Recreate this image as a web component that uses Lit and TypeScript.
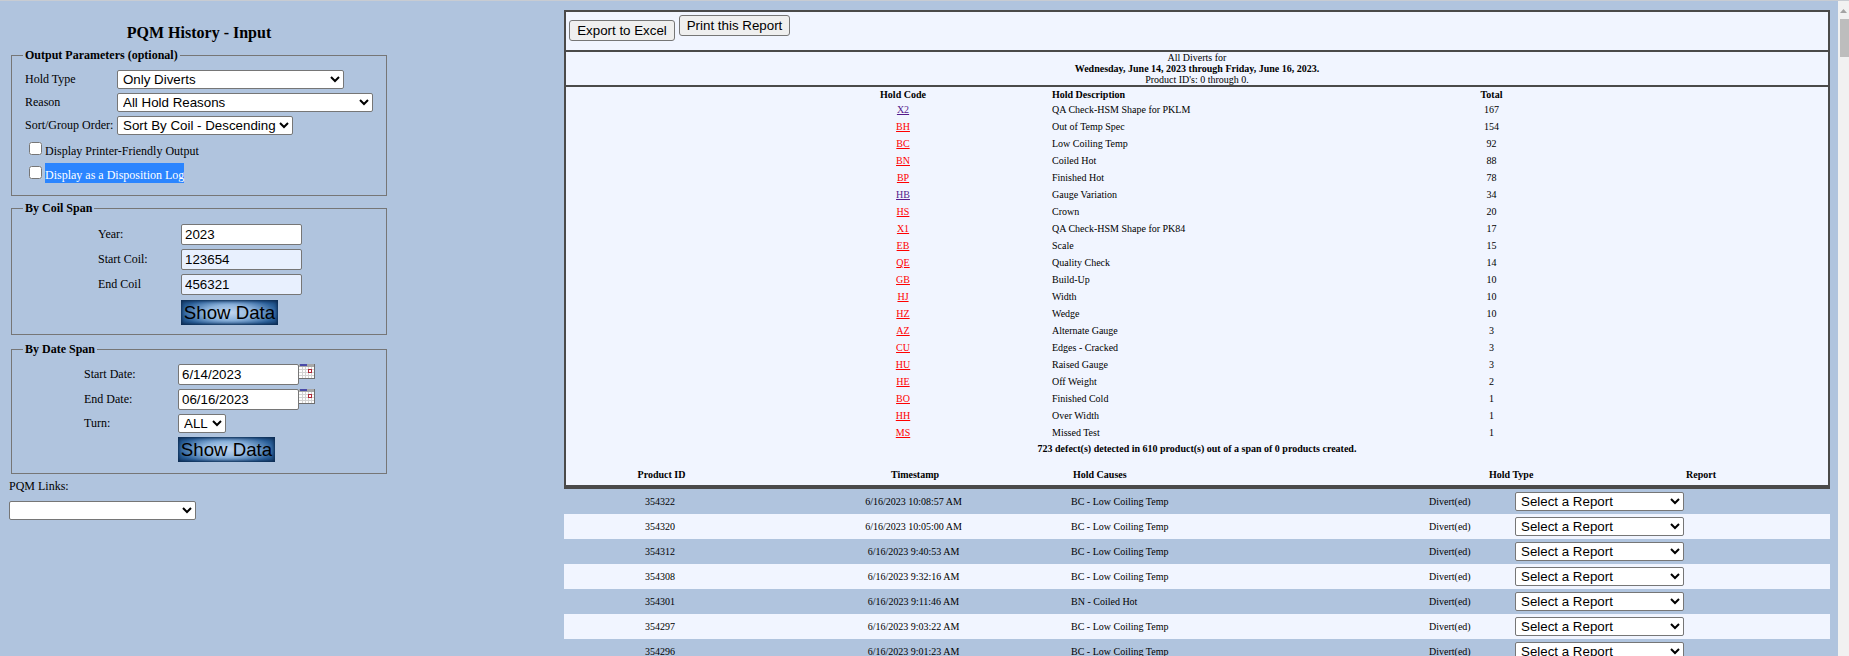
import {css, html, LitElement} from 'lit';
import {customElement} from 'lit/decorators.js';

type Hold = {code: string; desc: string; total: number; visited?: boolean};
type Row = {id: number; time: string; cause: string};

const holds: Hold[] = [
  {code: 'X2', desc: 'QA Check-HSM Shape for PKLM', total: 167, visited: true},
  {code: 'BH', desc: 'Out of Temp Spec', total: 154},
  {code: 'BC', desc: 'Low Coiling Temp', total: 92},
  {code: 'BN', desc: 'Coiled Hot', total: 88},
  {code: 'BP', desc: 'Finished Hot', total: 78},
  {code: 'HB', desc: 'Gauge Variation', total: 34, visited: true},
  {code: 'HS', desc: 'Crown', total: 20},
  {code: 'X1', desc: 'QA Check-HSM Shape for PK84', total: 17},
  {code: 'EB', desc: 'Scale', total: 15},
  {code: 'QE', desc: 'Quality Check', total: 14},
  {code: 'GB', desc: 'Build-Up', total: 10},
  {code: 'HJ', desc: 'Width', total: 10},
  {code: 'HZ', desc: 'Wedge', total: 10},
  {code: 'AZ', desc: 'Alternate Gauge', total: 3},
  {code: 'CU', desc: 'Edges - Cracked', total: 3},
  {code: 'HU', desc: 'Raised Gauge', total: 3},
  {code: 'HE', desc: 'Off Weight', total: 2},
  {code: 'BO', desc: 'Finished Cold', total: 1},
  {code: 'HH', desc: 'Over Width', total: 1},
  {code: 'MS', desc: 'Missed Test', total: 1},
];

const rows: Row[] = [
  {id: 354322, time: '6/16/2023 10:08:57 AM', cause: 'BC - Low Coiling Temp'},
  {id: 354320, time: '6/16/2023 10:05:00 AM', cause: 'BC - Low Coiling Temp'},
  {id: 354312, time: '6/16/2023 9:40:53 AM', cause: 'BC - Low Coiling Temp'},
  {id: 354308, time: '6/16/2023 9:32:16 AM', cause: 'BC - Low Coiling Temp'},
  {id: 354301, time: '6/16/2023 9:11:46 AM', cause: 'BN - Coiled Hot'},
  {id: 354297, time: '6/16/2023 9:03:22 AM', cause: 'BC - Low Coiling Temp'},
  {id: 354296, time: '6/16/2023 9:01:23 AM', cause: 'BC - Low Coiling Temp'},
];

@customElement('app-root')
export class AppRoot extends LitElement {
  static override styles = css`
    :host {
      display: flex;
      width: 1849px;
      height: 656px;
      overflow: hidden;
      background: #b0c4de;
      font-family: 'Liberation Serif', serif;
      font-size: 12px;
      color: #000;
      border-top: 1px solid #c8ccd2;
      box-sizing: border-box;
    }
    select,
    input,
    button.plain {
      font-family: 'Liberation Sans', Arial, sans-serif;
      font-size: 13.33px;
      box-sizing: border-box;
      margin: 0;
    }
    select {
      height: 19px;
      background: #fff;
      border: 1px solid #767676;
      border-radius: 2px;
      color: #000;
      padding: 0 0 0 1px;
    }

    /* left column */
    .left {
      width: 564px;
      flex: none;
      padding-left: 11px;
      box-sizing: border-box;
    }
    h1 {
      width: 376px;
      margin: 0;
      padding: 23px 0 0;
      height: 24px;
      font-size: 16px;
      line-height: 18px;
      text-align: center;
    }
    fieldset {
      width: 376px;
      box-sizing: border-box;
      margin: 0;
      border: 1px solid #767676;
      padding: 0;
    }
    legend {
      margin-left: 11px;
      padding: 0 2px;
      font-weight: bold;
      font-size: 12px;
      line-height: 14px;
    }
    .output {
      height: 148px;
    }
    .out-rows {
      display: grid;
      grid-template-columns: 92px auto;
      justify-content: start;
      row-gap: 4px;
      padding: 8px 0 0 13px;
      align-items: center;
    }
    .checks {
      padding: 4px 0 0 17px;
      display: flex;
      flex-direction: column;
      gap: 4px;
    }
    .check {
      display: flex;
      height: 20px;
      align-items: flex-start;
      line-height: 24px;
    }
    .check input {
      width: 13px;
      height: 13px;
      margin: 3px 3px 0 0;
    }
    .check span {
      height: 20px;
    }
    .selected {
      background: #2b85ff;
      color: #fff;
    }
    .w-type {
      width: 227px;
    }
    .w-reason {
      width: 256px;
    }
    .w-sort {
      width: 176px;
    }
    .coil {
      height: 134px;
      margin-top: 5px;
    }
    .date {
      height: 132px;
      margin-top: 7px;
    }
    .span-grid {
      display: grid;
      row-gap: 4px;
      align-items: center;
    }
    .coil .span-grid {
      grid-template-columns: 83px 121px;
      padding: 9px 0 0 86px;
    }
    .date .span-grid {
      grid-template-columns: 94px 121px auto;
      padding: 8px 0 0 72px;
    }
    .span-grid input {
      width: 121px;
      height: 21px;
      border: 1px solid #767676;
      border-radius: 2px;
      padding: 1px 3px;
      background: #fff;
      color: #000;
    }
    .span-grid input.filled {
      background: #e8f0fe;
    }
    .cal {
      display: block;
      align-self: start;
    }
    .show {
      grid-column: 2;
      width: 97px;
      height: 25px;
      padding: 0;
      border: 0;
      white-space: nowrap;
      font-family: 'Liberation Sans', Arial, sans-serif;
      font-size: 18.67px;
      line-height: 25px;
      color: #000;
      text-align: center;
      background: radial-gradient(ellipse 60% 72% at 50% 50%, #c3d6ee 0%, #8db3dc 42%, #2a5f98 82%, #174272 100%);
      box-shadow: inset 0 0 3px 1px #0c2a50;
    }
    .coil .show {
      margin-top: 1px;
    }
    .turn {
      display: block;
      width: 48px;
    }
    .links-label {
      margin: 5px 0 0 -2px;
      line-height: 15px;
    }
    .links {
      display: block;
      width: 187px;
      margin: 7px 0 0 -2px;
    }

    /* report column */
    .report {
      width: 1266px;
      flex: none;
      padding-top: 9px;
    }
    .box {
      background: #f1f5ff;
      border: 2px solid #4a4a4a;
      box-sizing: border-box;
    }
    .actions {
      height: 40px;
      border-bottom: 0;
      display: flex;
      align-items: flex-start;
      padding: 3px 0 0 3px;
      gap: 4px;
    }
    button.plain {
      width: 111px;
      height: 21px;
      padding: 0;
      background: #efefef;
      border: 1px solid #767676;
      border-radius: 3px;
      color: #000;
    }
    button.export {
      width: 106px;
      margin-top: 5px;
    }
    .heading {
      height: 35px;
      border-bottom: 0;
      font-size: 10px;
      line-height: 11px;
      text-align: center;
    }
    .heading b {
      display: block;
    }
    .summary {
      height: 404px;
      font-size: 10px;
      border-width: 2px 2px 4px 2px;
    }
    .codes {
      display: grid;
      grid-template-columns: 337px 149px 413px 53px;
    }
    .codes > div {
      height: 17px;
      line-height: 17px;
    }
    .codes > .head {
      height: 14px;
      line-height: 15px;
      font-weight: bold;
    }
    .codes .c {
      grid-column: 2;
      width: 0;
      white-space: nowrap;
      display: flex;
      justify-content: center;
    }
    .codes .d {
      grid-column: 3;
    }
    .codes .t {
      grid-column: 4;
      text-align: center;
    }
    a {
      color: #f00;
      text-decoration: underline;
    }
    a.seen {
      color: #551a8b;
    }
    .defects {
      font-weight: bold;
      text-align: center;
      line-height: 14px;
      height: 14px;
      margin-top: 1px;
    }
    .list-head {
      display: grid;
      grid-template-columns: 191px 316px 416px 197px 1fr;
      margin-top: 12px;
      font-weight: bold;
      line-height: 14px;
      height: 14px;
    }
    .row {
      display: grid;
      grid-template-columns: 192px 315px 358px 86px 1fr;
      height: 25px;
      box-sizing: border-box;
      padding-bottom: 1px;
      align-items: center;
      font-size: 10px;
    }
    .row:nth-child(even) {
      background: #f1f5ff;
    }
    .row select {
      display: block;
      width: 169px;
      height: 19px;
    }
    .mid {
      text-align: center;
    }

    /* browser scrollbar, cropped by the screenshot */
    .scroll {
      margin-left: 8px;
      width: 11px;
      flex: none;
      background: #f1f1f1;
      position: relative;
    }
    .scroll svg {
      position: absolute;
      left: 2px;
      top: 8px;
    }
    .thumb {
      position: absolute;
      left: 2px;
      right: 0;
      top: 18px;
      height: 38px;
      background: #bdbdbd;
    }
  `;

  private calendar() {
    return html`<svg class="cal" width="16" height="15" viewBox="0 0 16 15">
      <rect width="16" height="15" fill="#fdfdfd" />
      <rect width="16" height="3" fill="#a8a8a8" />
      <rect x="1" width="7" height="2" fill="#4a4aa8" />
      <path d="M0 5.5H15M0 8.5H15M0 11.5H15M3.5 3V14M6.5 3V14M9.5 3V14M12.5 3V14" stroke="#d2d2d2" />
      <rect x="9.5" y="5.5" width="3" height="3" fill="#fff" stroke="#b02838" />
      <path d="M15.5 0V15M0 14.5H16" stroke="#6e6e6e" />
    </svg>`;
  }

  private reportRow(row: Row) {
    return html`<div class="row">
      <div class="mid">${row.id}</div>
      <div class="mid">${row.time}</div>
      <div>${row.cause}</div>
      <div>Divert(ed)</div>
      <div>
        <select><option>Select a Report</option></select>
      </div>
    </div>`;
  }

  override render() {
    return html`
      <div class="left">
        <h1>PQM History - Input</h1>
        <fieldset class="output">
          <legend>Output Parameters (optional)</legend>
          <div class="out-rows">
            <span>Hold Type</span>
            <select class="w-type"><option>Only Diverts</option></select>
            <span>Reason</span>
            <select class="w-reason"><option>All Hold Reasons</option></select>
            <span>Sort/Group Order:</span>
            <select class="w-sort"><option>Sort By Coil - Descending</option></select>
          </div>
          <div class="checks">
            <label class="check">
              <input type="checkbox" /><span>Display Printer-Friendly Output</span>
            </label>
            <label class="check">
              <input type="checkbox" /><span class="selected">Display as a Disposition Log</span>
            </label>
          </div>
        </fieldset>

        <fieldset class="coil">
          <legend>By Coil Span</legend>
          <div class="span-grid">
            <span>Year:</span>
            <input value="2023" />
            <span>Start Coil:</span>
            <input class="filled" value="123654" />
            <span>End Coil</span>
            <input class="filled" value="456321" />
            <button class="show">Show Data</button>
          </div>
        </fieldset>

        <fieldset class="date">
          <legend>By Date Span</legend>
          <div class="span-grid">
            <span>Start Date:</span>
            <input value="6/14/2023" />
            ${this.calendar()}
            <span>End Date:</span>
            <input value="06/16/2023" />
            ${this.calendar()}
            <span>Turn:</span>
            <div><select class="turn"><option>ALL</option></select></div>
            <span></span>
            <span></span>
            <button class="show">Show Data</button>
          </div>
        </fieldset>

        <div class="links-label">PQM Links:</div>
        <select class="links"><option></option></select>
      </div>

      <div class="report">
        <div class="box actions">
          <button class="plain export">Export to Excel</button>
          <button class="plain">Print this Report</button>
        </div>
        <div class="box heading">
          All Diverts for
          <b>Wednesday, June 14, 2023 through Friday, June 16, 2023.</b>
          Product ID's: 0 through 0.
        </div>
        <div class="box summary">
          <div class="codes">
            <div class="c head"><span>Hold Code</span></div>
            <div class="d head">Hold Description</div>
            <div class="t head">Total</div>
            ${holds.map(
              (h) => html`
                <div class="c"><a class=${h.visited ? 'seen' : ''} href="#">${h.code}</a></div>
                <div class="d">${h.desc}</div>
                <div class="t">${h.total}</div>
              `
            )}
          </div>
          <div class="defects">723 defect(s) detected in 610 product(s) out of a span of 0 products created.</div>
          <div class="list-head">
            <div class="mid">Product ID</div>
            <div class="mid">Timestamp</div>
            <div>Hold Causes</div>
            <div>Hold Type</div>
            <div>Report</div>
          </div>
        </div>
        <div class="rows">${rows.map((r) => this.reportRow(r))}</div>
      </div>

      <div class="scroll">
        <svg width="7" height="4" viewBox="0 0 7 4"><path d="M3.5 0L7 4H0Z" fill="#a3a3a3" /></svg>
        <div class="thumb"></div>
      </div>
    `;
  }
}
